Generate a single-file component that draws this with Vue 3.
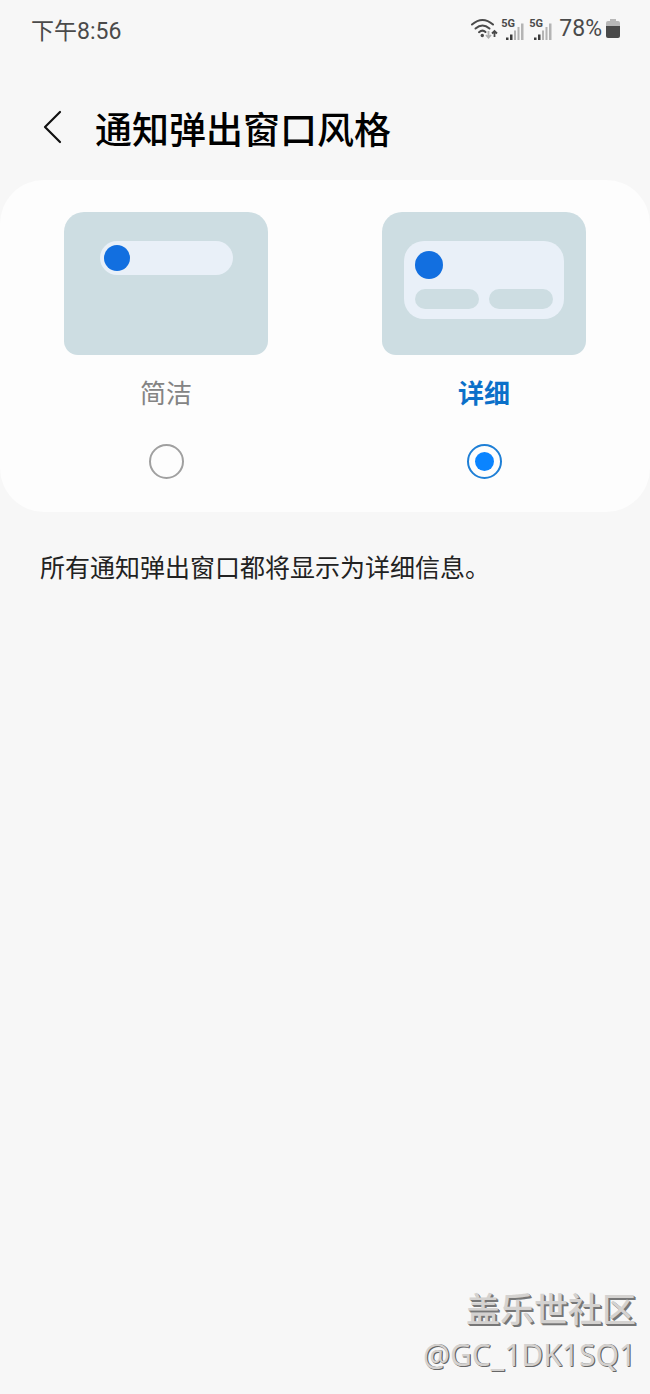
<script setup>
import { ref } from 'vue'

const style = ref('detailed')
const options = [
  { value: 'brief', label: '简洁' },
  { value: 'detailed', label: '详细' },
]
</script>

<template>
  <div class="page">
    <header class="status">
      <span class="time">下午8:56</span>
      <div class="indicators">
        <svg class="wifi" width="28" height="22" viewBox="0 0 28 22" aria-hidden="true">
          <g fill="none" stroke="#4a4a4a" stroke-width="2" stroke-linecap="round">
            <path d="M2 6.5Q12.500 -2.500 23 6.500" />
            <path d="M5.500 10.500Q12.500 4.500 19.500 10.500" />
            <path d="M9 14.200Q12.500 11.200 15.500 14" />
          </g>
          <circle cx="12.300" cy="17.500" r="1.700" fill="#4a4a4a" />
          <path d="M18.500 13V19M16 17L18.500 19.600L21 17" fill="none" stroke="#b0b0b0" stroke-width="1.800" />
          <path d="M24.500 19V13.500M22 15.500L24.500 13L27 15.500" fill="none" stroke="#4a4a4a" stroke-width="1.800" />
        </svg>
        <span v-for="n in 2" :key="n" class="cell">
          <span class="gen">5G</span>
          <svg width="18" height="18" viewBox="0 0 18 18" aria-hidden="true">
            <path d="M0 15.500H2.500V18H0ZM4 12.500H6.500V18H4Z" fill="#3c3c3c" />
            <path d="M8 8.500H10V18H8ZM11.500 5H13.500V18H11.500ZM15 1.500H17.500V18H15Z" fill="#b4b4b4" />
          </svg>
        </span>
        <span class="percent">78%</span>
        <svg class="battery" width="14" height="20" viewBox="0 0 14 20" aria-hidden="true">
          <path d="M4 0H10V2H12Q14 2 14 4V8H0V4Q0 2 2 2H4Z" fill="#b8b8b8" />
          <path d="M0 7H14V17Q14 19 12 19H2Q0 19 0 17Z" fill="#4a4a4a" />
        </svg>
      </div>
    </header>

    <div class="titlebar">
      <button class="back" type="button" aria-label="返回">
        <svg width="20" height="34" viewBox="0 0 20 34" aria-hidden="true">
          <path d="M17 2L2 17L17 32" fill="none" stroke="#111" stroke-width="2.200" stroke-linecap="round" stroke-linejoin="round" />
        </svg>
      </button>
      <h1>通知弹出窗口风格</h1>
    </div>

    <main>
      <div class="card" role="radiogroup" aria-label="通知弹出窗口风格">
        <label v-for="o in options" :key="o.value" class="option">
          <span class="preview">
            <span class="popup" :class="o.value">
              <span class="dot"></span>
              <span v-if="o.value === 'detailed'" class="actions">
                <span></span>
                <span></span>
              </span>
            </span>
          </span>
          <span class="name" :class="{ selected: style === o.value }">{{ o.label }}</span>
          <input v-model="style" type="radio" name="popup-style" :value="o.value" />
        </label>
      </div>
      <p class="note">所有通知弹出窗口都将显示为详细信息。</p>
    </main>

    <footer class="watermark">
      <strong>盖乐世社区</strong>
      <span>@GC_1DK1SQ1</span>
    </footer>
  </div>
</template>

<style>
body {
  background: #f7f7f7;
}
</style>

<style scoped>
.page {
  box-sizing: border-box;
  min-height: 100vh;
  display: flex;
  flex-direction: column;
  background: #f7f7f7;
  color: #000;
  font-family: Roboto, "Noto Sans CJK SC", sans-serif;
}
.status {
  display: flex;
  justify-content: space-between;
  align-items: center;
  height: 60px;
  padding: 0 30px 0 31px;
  color: #4a4a4a;
}
.time {
  padding-top: 4px;
  font-size: 23px;
  line-height: 28px;
}
.indicators {
  display: flex;
  align-items: center;
  height: 28px;
  padding-bottom: 2px;
}
.cell {
  display: flex;
  align-items: flex-end;
  width: 28px;
  height: 22px;
}
.wifi {
  margin-right: 3px;
}
.gen {
  align-self: flex-start;
  width: 13px;
  margin-right: -8px;
  font-size: 11px;
  line-height: 12px;
  font-weight: 700;
}
.percent {
  margin: 0 4px 0 2px;
  font-size: 23px;
  line-height: 28px;
}
.titlebar {
  display: flex;
  align-items: flex-start;
  margin-top: 45px;
  padding: 0 42px 0 43px;
  margin-bottom: 21px;
}
.back {
  display: flex;
  align-items: flex-start;
  width: 52px;
  padding: 5px 0;
  border: 0;
  background: none;
}
h1 {
  margin: 0;
  font-size: 37px;
  line-height: 54px;
  font-weight: 500;
}
.card {
  display: grid;
  grid-template-columns: 1fr 1fr;
  padding: 32px 7px 33px;
  border-radius: 44px;
  background: #fdfdfd;
}
.option {
  display: flex;
  flex-direction: column;
  align-items: center;
}
.preview {
  box-sizing: border-box;
  display: flex;
  justify-content: center;
  align-items: flex-start;
  width: 204px;
  height: 143px;
  padding-top: 29px;
  border-radius: 20px 20px 14px 14px;
  background: #cddde2;
}
.popup {
  box-sizing: border-box;
  display: flex;
  background: #e9f0f8;
}
.popup.brief {
  width: 133px;
  padding: 4px;
  border-radius: 18px;
}
.popup.detailed {
  flex-direction: column;
  gap: 10px;
  width: 160px;
  padding: 10px 11px;
  border-radius: 20px;
}
.dot {
  width: 26px;
  height: 26px;
  border-radius: 50%;
  background: #126fe0;
}
.detailed .dot {
  width: 28px;
  height: 28px;
}
.actions {
  display: flex;
  gap: 10px;
}
.actions span {
  flex: 1;
  height: 20px;
  border-radius: 10px;
  background: #cddde2;
}
.name {
  margin: 20px 0 31px;
  font-size: 26px;
  line-height: 38px;
  color: #848484;
}
.name.selected {
  font-weight: 700;
  color: #0b70c9;
}
input {
  appearance: none;
  box-sizing: border-box;
  width: 35px;
  height: 35px;
  margin: 0;
  border: 2px solid #a0a0a0;
  border-radius: 50%;
}
input:checked {
  padding: 6px;
  border-color: #1e7fd6;
  background: #0a84ff content-box;
}
.note {
  margin: 38px 40px 0;
  font-size: 25px;
  line-height: 38px;
  color: #222;
}
.watermark {
  display: flex;
  flex-direction: column;
  align-items: flex-end;
  margin-top: auto;
  padding: 0 14px 18px;
  color: #d4d2d0;
}
.watermark strong {
  font-size: 34px;
  line-height: 48px;
  font-weight: 500;
  text-shadow: 1px 1px 0 #777, 2px 2px 0 #777;
}
.watermark span {
  font-family: "Noto Sans", sans-serif;
  font-size: 30px;
  line-height: 42px;
  text-shadow: 1px 1px 0 #666, 1px 0 0 #777;
}
</style>
